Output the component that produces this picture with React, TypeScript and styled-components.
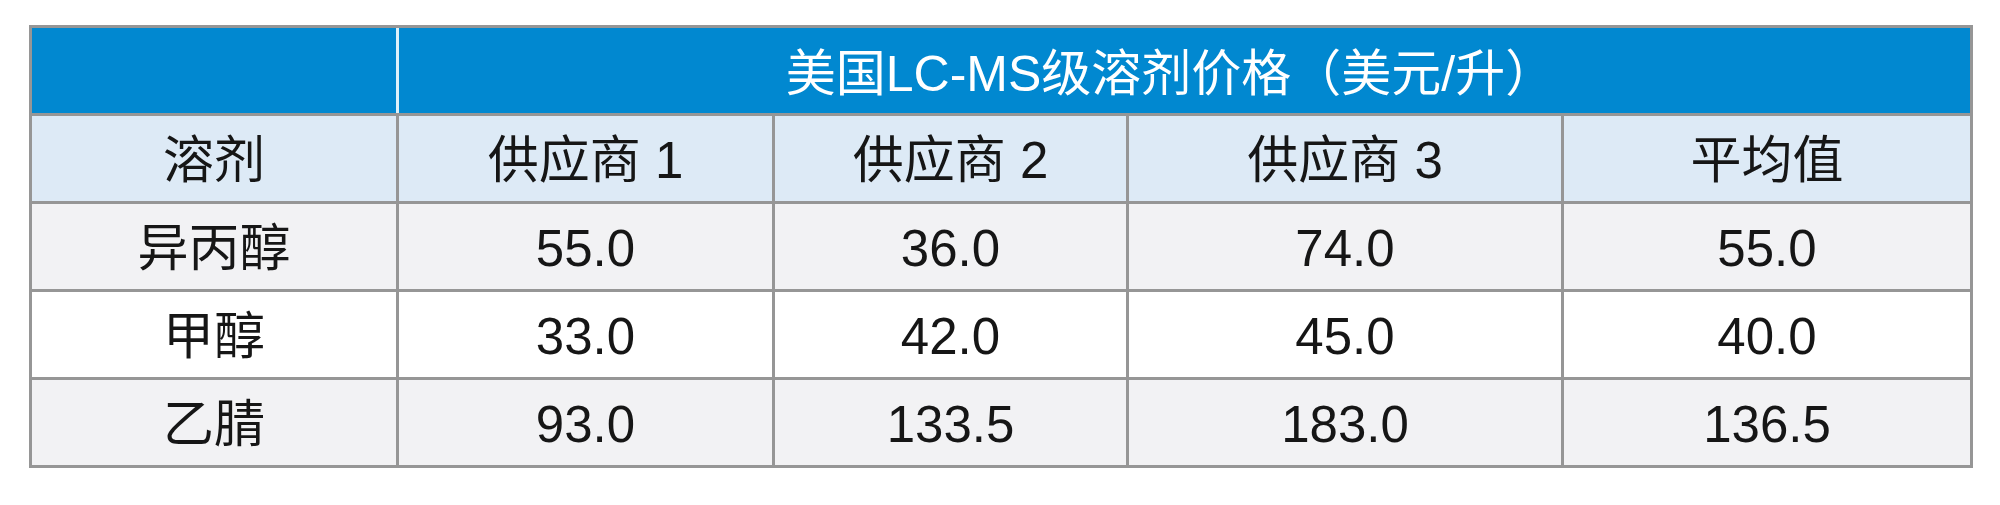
import React from "react";
import styled, { createGlobalStyle } from "styled-components";

const GlobalStyle = createGlobalStyle`
  html, body {
    margin: 0;
    padding: 0;
    background: #ffffff;
  }
  body {
    font-family: "Liberation Sans", "Noto Sans CJK SC", sans-serif;
  }
`;

const Page = styled.div`
  padding: 25px 0 0 29px;
`;

const Grid = styled.div`
  display: grid;
  grid-template-columns: 364px 373px 351px 432px 406px;
  grid-auto-rows: 85px;
  gap: 3px;
  padding: 3px;
  width: max-content;
  background: #969696;
`;

const Cell = styled.div<{ $bg: string }>`
  display: flex;
  align-items: center;
  justify-content: center;
  background: ${(p) => p.$bg};
  color: #161616;
  font-family: "Liberation Sans", "Noto Sans CJK SC", sans-serif;
  font-size: 51px;
  line-height: 1;
  padding-top: 3px;
  box-sizing: border-box;
  white-space: nowrap;
`;

const HeaderCell = styled.div`
  background: #0188d0;
`;

const TitleCell = styled.div`
  grid-column: span 4;
  display: flex;
  align-items: center;
  justify-content: center;
  background: #0188d0;
  box-shadow: -3px 0 0 #def1fa;
  color: #ffffff;
  font-family: "Liberation Sans", "Noto Sans CJK SC", sans-serif;
  font-size: 50px;
  line-height: 1;
  padding: 6px 28px 0 0;
  box-sizing: border-box;
  white-space: nowrap;
`;

const headers = ["溶剂", "供应商 1", "供应商 2", "供应商 3", "平均值"];

const rows: string[][] = [
  ["异丙醇", "55.0", "36.0", "74.0", "55.0"],
  ["甲醇", "33.0", "42.0", "45.0", "40.0"],
  ["乙腈", "93.0", "133.5", "183.0", "136.5"],
];

export default function App() {
  return (
    <>
      <GlobalStyle />
      <Page>
        <Grid>
          <HeaderCell />
          <TitleCell>美国LC-MS级溶剂价格（美元/升）</TitleCell>
          {headers.map((h) => (
            <Cell key={h} $bg="#ddeaf6">
              {h}
            </Cell>
          ))}
          {rows.map((r, i) =>
            r.map((v, j) => (
              <Cell key={`${i}-${j}`} $bg={i % 2 === 0 ? "#f2f2f4" : "#ffffff"}>
                {v}
              </Cell>
            ))
          )}
        </Grid>
      </Page>
    </>
  );
}
